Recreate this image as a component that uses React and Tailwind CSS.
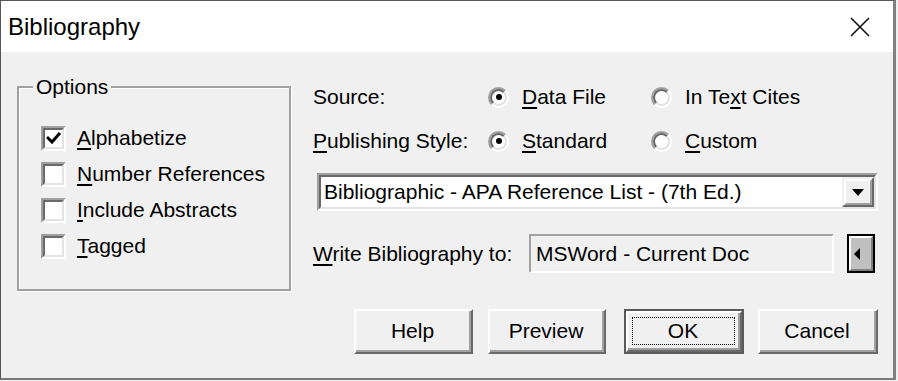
import React from "react";

// mnemonic letter underline
const U = ({ children }) => (
  <span className="underline decoration-[2px] underline-offset-[3px]">{children}</span>
);

const Checkbox = ({ checked }) => (
  <span className="flex h-[25px] w-[25px] shrink-0 border-2 border-t-[#a0a0a0] border-l-[#a0a0a0] border-r-white border-b-white">
    <span className="flex flex-1 items-center justify-center border-2 border-t-[#696969] border-l-[#696969] border-r-[#e3e3e3] border-b-[#e3e3e3] bg-white">
      {checked && (
        <svg width="15" height="15" viewBox="0 0 15 15">
          <path d="M2 7 L6 11 L13 3" fill="none" stroke="#000" strokeWidth="3" strokeLinecap="square" />
        </svg>
      )}
    </span>
  </span>
);

const Radio = ({ checked }) => (
  <span className="flex h-[21px] w-[21px] shrink-0 rounded-full border-2 border-t-[#a0a0a0] border-l-[#a0a0a0] border-r-white border-b-white">
    <span className="flex flex-1 items-center justify-center rounded-full border-2 border-t-[#696969] border-l-[#696969] border-r-[#e3e3e3] border-b-[#e3e3e3] bg-white">
      {checked && <span className="h-[6px] w-[6px] rounded-full bg-black" />}
    </span>
  </span>
);

const RadioOption = ({ checked, children, className = "" }) => (
  <div className={`flex items-center gap-[13px] ${className}`}>
    <Radio checked={checked} />
    <span>{children}</span>
  </div>
);

const Button = ({ children, isDefault, className = "" }) => (
  <button className={`h-[45px] ${isDefault ? "border-2 border-[#5a5a5a]" : ""} ${className}`}>
    <div className="flex h-full w-full border-2 border-t-white border-l-white border-r-[#696969] border-b-[#696969]">
      <div className="flex flex-1 items-center justify-center border-r-2 border-b-2 border-r-[#a0a0a0] border-b-[#a0a0a0] bg-[#f0f0f0]">
        {isDefault ? (
          <span className="flex h-[28px] w-[103px] items-center justify-center border border-dotted border-black">
            {children}
          </span>
        ) : (
          children
        )}
      </div>
    </div>
  </button>
);

const options = [
  { label: "lphabetize", key: "A", checked: true },
  { label: "umber References", key: "N" },
  { label: "nclude Abstracts", key: "I" },
  { label: "agged", key: "T" },
];

export default function App() {
  return (
    <div className="h-[381px] w-[898px] overflow-hidden bg-[#f0f0f0] font-['Liberation_Sans',Arial,sans-serif] text-[21px] leading-[24px] text-black">
      <div className="flex h-[380px] w-[896px] flex-col border-t border-l border-[#555] border-r-[3px] border-r-[#808080] border-b-2 border-b-[#7a7a7a] bg-[#f0f0f0]">
        {/* Title bar */}
        <div className="flex h-[51px] items-center justify-between bg-white pl-[7px] pr-[23px]">
          <span className="text-[24px] leading-[28px]">Bibliography</span>
          <svg width="20" height="20" viewBox="0 0 20 20">
            <path d="M1 1 L19 19 M19 1 L1 19" stroke="#111" strokeWidth="1.6" />
          </svg>
        </div>

        <div className="flex flex-1">
          {/* Options group */}
          <fieldset className="ml-[16px] mt-[23px] h-[216px] w-[274px] border-2 border-[#a0a0a0] pl-[14px] shadow-[inset_1px_1px_0_#fff,1px_1px_0_#fff]">
            <legend className="bg-[#f0f0f0] px-[3px]">Options</legend>
            <div className="mt-[21px] flex flex-col pl-[8px]">
              {options.map((o) => (
                <div key={o.key} className="flex h-[36px] items-center gap-[11px]">
                  <Checkbox checked={o.checked} />
                  <span>
                    <U>{o.key}</U>
                    {o.label}
                  </span>
                </div>
              ))}
            </div>
          </fieldset>

          {/* Right column */}
          <div className="ml-[22px] flex w-[565px] flex-col pt-[23px]">
            <div className="flex h-[44px] items-center">
              <span className="w-[175px]">Source:</span>
              <RadioOption checked className="w-[163px]">
                <U>D</U>ata File
              </RadioOption>
              <RadioOption>
                In Te<U>x</U>t Cites
              </RadioOption>
            </div>
            <div className="flex h-[44px] items-center">
              <span className="w-[175px]">
                <U>P</U>ublishing Style:
              </span>
              <RadioOption checked className="w-[163px]">
                <U>S</U>tandard
              </RadioOption>
              <RadioOption>
                <U>C</U>ustom
              </RadioOption>
            </div>

            {/* Combo box */}
            <div className="ml-[4px] mt-[10px] flex h-[38px] w-[561px] border-2 border-t-[#a0a0a0] border-l-[#a0a0a0] border-r-white border-b-white">
              <div className="flex flex-1 items-center border-2 border-t-[#696969] border-l-[#696969] border-r-[#e3e3e3] border-b-[#e3e3e3] bg-white">
                <span className="flex-1 pl-[3px]">Bibliographic - APA Reference List - (7th Ed.)</span>
                <div className="flex h-full w-[32px] border-2 border-t-[#f0f0f0] border-l-[#f0f0f0] border-r-[#696969] border-b-[#696969]">
                  <div className="flex flex-1 items-center justify-center border-2 border-t-white border-l-white border-r-[#a0a0a0] border-b-[#a0a0a0] bg-[#f0f0f0]">
                    <svg width="12" height="7" viewBox="0 0 12 7">
                      <path d="M0 0 H12 L6 7 Z" fill="#000" />
                    </svg>
                  </div>
                </div>
              </div>
            </div>

            {/* Write to */}
            <div className="mt-[23px] flex h-[39px] items-center">
              <span className="w-[216px]">
                <U>W</U>rite Bibliography to:
              </span>
              <div className="flex h-full w-[305px] items-center border-2 border-t-[#a0a0a0] border-l-[#a0a0a0] border-r-white border-b-white bg-[#f0f0f0] pl-[5px]">
                MSWord - Current Doc
              </div>
              <div className="ml-[13px] flex h-full w-[28px] border-2 border-black">
                <div className="flex flex-1 items-center justify-start border-2 border-t-white border-l-white border-r-[#808080] border-b-[#808080] bg-[#c0c0c0] pl-[3px]">
                  <svg width="6" height="12" viewBox="0 0 6 12">
                    <path d="M6 0 V12 L0 6 Z" fill="#000" />
                  </svg>
                </div>
              </div>
            </div>

            {/* Buttons */}
            <div className="mt-[36px] flex justify-end">
              <Button className="w-[119px]">Help</Button>
              <Button className="ml-[15px] w-[118px]">Preview</Button>
              <Button isDefault className="ml-[18px] w-[120px]">OK</Button>
              <Button className="ml-[14px] w-[120px]">Cancel</Button>
            </div>
          </div>
        </div>
      </div>
    </div>
  );
}
